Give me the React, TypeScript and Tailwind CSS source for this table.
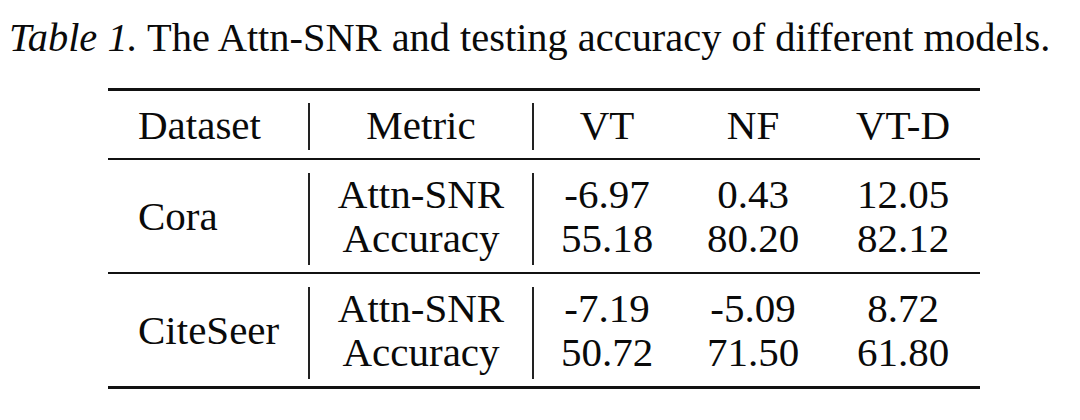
import React from "react";

const rows = [
  {
    name: "Cora",
    data: [
      ["Attn-SNR", "-6.97", "0.43", "12.05"],
      ["Accuracy", "55.18", "80.20", "82.12"],
    ],
  },
  {
    name: "CiteSeer",
    data: [
      ["Attn-SNR", "-7.19", "-5.09", "8.72"],
      ["Accuracy", "50.72", "71.50", "61.80"],
    ],
  },
];

function VLine({ tall }: { tall: boolean }) {
  return <div className={tall ? "w-[2px] h-[92px] mt-[1px] bg-[#222] shrink-0" : "w-[2px] h-[47px] bg-[#222] shrink-0"} />;
}

export default function App() {
  return (
    <div className="w-[1080px] h-[420px] bg-white text-[#0a0a0a] font-['Liberation_Serif',serif] overflow-hidden">
      <div className="pt-[18px] pl-[9px] text-[40.4px] leading-[40px] whitespace-nowrap">
        <i>Table 1.</i> The Attn-SNR and testing accuracy of different models.
      </div>
      <div className="mt-[30px] ml-[108px] w-[872px] text-[41px] leading-[44px]">
        <div className="h-[3px] bg-[#111]" />
        <div className="flex items-start pt-[12px] h-[67px]">
          <div className="w-[200px] pl-[30px] shrink-0">Dataset</div>
          <VLine tall={false} />
          <div className="w-[222px] text-center shrink-0">Metric</div>
          <VLine tall={false} />
          <div className="w-[146px] text-center shrink-0">VT</div>
          <div className="w-[146px] text-center shrink-0">NF</div>
          <div className="w-[154px] text-center shrink-0">VT-D</div>
        </div>
        {rows.map((r) => (
          <div key={r.name}>
            <div className="h-[2px] bg-[#111]" />
            <div className="flex items-start pt-[12px] h-[112px]">
              <div className="w-[200px] pl-[30px] h-[88px] flex items-center shrink-0">{r.name}</div>
              <VLine tall={true} />
              <div className="w-[222px] text-center flex flex-col shrink-0">
                {r.data.map((d) => (
                  <div key={d[0]}>{d[0]}</div>
                ))}
              </div>
              <VLine tall={true} />
              <div className="w-[146px] text-center flex flex-col shrink-0">
                {r.data.map((d) => (
                  <div key={d[0]}>{d[1]}</div>
                ))}
              </div>
              <div className="w-[146px] text-center flex flex-col shrink-0">
                {r.data.map((d) => (
                  <div key={d[0]}>{d[2]}</div>
                ))}
              </div>
              <div className="w-[154px] text-center flex flex-col shrink-0">
                {r.data.map((d) => (
                  <div key={d[0]}>{d[3]}</div>
                ))}
              </div>
            </div>
          </div>
        ))}
        <div className="h-[3px] bg-[#111]" />
      </div>
    </div>
  );
}
